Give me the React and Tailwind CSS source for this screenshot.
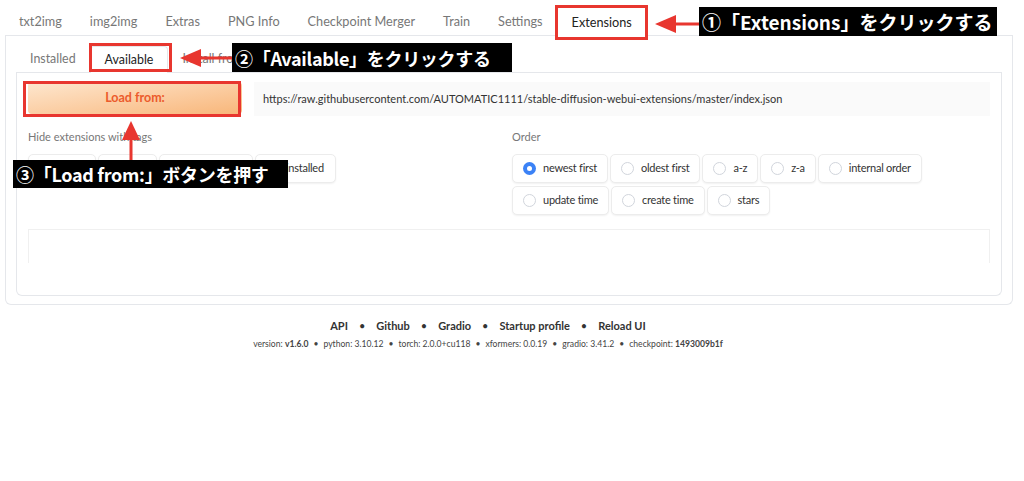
import { Fragment } from 'react'

const TOP_TABS = ['txt2img', 'img2img', 'Extras', 'PNG Info', 'Checkpoint Merger', 'Train', 'Settings', 'Extensions']
const SUB_TABS = ['Installed', 'Available', 'Install from URL', 'Backup/Restore']
const TAGS = [
  { name: 'script', checked: false },
  { name: 'ads', checked: true },
  { name: 'localization', checked: true },
  { name: 'installed', checked: true },
]
const ORDER_ROWS = [
  ['newest first', 'oldest first', 'a-z', 'z-a', 'internal order'],
  ['update time', 'create time', 'stars'],
]

function Checkbox({ checked }) {
  return checked ? (
    <span className="w-[12px] h-[12px] rounded-[3px] bg-[#2563eb] flex items-center justify-center">
      <svg width="9" height="9" viewBox="0 0 10 10"><path d="M2 5.2l2 2 4-4.4" stroke="white" strokeWidth="1.6" fill="none" /></svg>
    </span>
  ) : (
    <span className="w-[12px] h-[12px] rounded-[3px] border border-gray-300 bg-white" />
  )
}

function Radio({ checked }) {
  return checked ? (
    <span className="w-[13px] h-[13px] rounded-full bg-[#3b82f6] flex items-center justify-center">
      <span className="w-[5px] h-[5px] rounded-full bg-white" />
    </span>
  ) : (
    <span className="w-[13px] h-[13px] rounded-full border border-gray-300 bg-white" />
  )
}

function Pill({ children, wide }) {
  return (
    <label className={`h-[29px] flex items-center gap-[7px] rounded-[5px] border border-[#ececec] bg-white shadow-[0_1px_2px_rgba(0,0,0,0.06)] text-[11px] tracking-[-0.25px] text-[#333] ${wide ? 'px-[11px]' : 'px-[10px]'}`}>
      {children}
    </label>
  )
}

function Note({ children, className }) {
  return (
    <div className={`absolute bg-black text-white font-bold leading-none whitespace-nowrap flex items-center px-[3px] font-['Noto_Sans_CJK_JP',sans-serif] ${className}`}>
      {children}
    </div>
  )
}

export default function App() {
  return (
    <div className="relative w-[1024px] h-[481px] bg-white font-['Lato',sans-serif] overflow-hidden">
      <div className="pt-[6px] pl-[5px] pr-[11px]">
        {/* top tabs */}
        <div className="flex h-[30px] border-b border-[#e5e7eb]">
          {TOP_TABS.map(t => (
            <div key={t}
              className={`px-[14px] pt-[3px] flex items-center text-[12.7px] ${t === 'Extensions' ? 'bg-white border border-b-0 border-[#e5e7eb] rounded-t-[4px] text-[#222] -mb-px' : 'text-[#777]'}`}>
              {t}
            </div>
          ))}
        </div>

        <div className="border border-t-0 border-[#e5e7eb] rounded-b-[6px] px-[10px] pt-[10px] pb-[8px]">
          {/* sub tabs */}
          <div className="flex h-[27px] border-b border-[#e5e7eb]">
            {SUB_TABS.map(t => (
              <div key={t}
                className={`px-[14px] flex items-center text-[12.4px] ${t === 'Available' ? 'bg-white border border-b-0 border-[#e5e7eb] rounded-t-[4px] text-[#222] -mb-px' : 'text-[#777]'}`}>
                {t}
              </div>
            ))}
          </div>

          <div className="border border-t-0 border-[#e5e7eb] rounded-b-[6px] px-[11px] pt-[9px] pb-[32px]">
            <div className="flex gap-[12px]">
              <button className="w-[214px] h-[32px] rounded-[4px] bg-gradient-to-br from-[#fde7cf] to-[#f8b679] text-[#ec5b2c] font-bold text-[12.5px]">
                Load from:
              </button>
              <div className="flex-1 h-[34px] bg-[#fafafa] flex items-center px-[9px] text-[11px] text-[#333]">
                https://raw.githubusercontent.com/AUTOMATIC1111/stable-diffusion-webui-extensions/master/index.json
              </div>
            </div>

            <div className="grid grid-cols-2 gap-[6px] mt-[13px]">
              <div>
                <div className="text-[11px] text-[#777] mb-[8px]">Hide extensions with tags</div>
                <div className="flex gap-[2px]">
                  {TAGS.map(t => (
                    <Pill key={t.name} wide><Checkbox checked={t.checked} />{t.name}</Pill>
                  ))}
                </div>
              </div>
              <div>
                <div className="text-[11px] text-[#777] mb-[8px]">Order</div>
                <div className="flex flex-col gap-[3px]">
                  {ORDER_ROWS.map((row, r) => (
                    <div key={r} className="flex gap-[2px]">
                      {row.map(o => (
                        <Pill key={o}><Radio checked={o === 'newest first'} />{o}</Pill>
                      ))}
                    </div>
                  ))}
                </div>
              </div>
            </div>

            <div className="mt-[14px] h-[34px] border border-b-0 border-[#f0f0f0]" />
          </div>
        </div>
      </div>

      {/* footer */}
      <div className="mt-[13px] mr-[48px] flex flex-col items-center text-[#333]">
        <div className="flex gap-[11px] text-[11px] font-bold">
          {['API', 'Github', 'Gradio', 'Startup profile', 'Reload UI'].map((l, i) => (
            <Fragment key={l}>
              {i > 0 && <span className="font-normal">•</span>}
              <span>{l}</span>
            </Fragment>
          ))}
        </div>
        <div className="mt-[4px] flex gap-[5px] text-[8.6px] text-[#444]">
          <span>version: <b>v1.6.0</b></span><span>•</span>
          <span>python: 3.10.12</span><span>•</span>
          <span>torch: 2.0.0+cu118</span><span>•</span>
          <span>xformers: 0.0.19</span><span>•</span>
          <span>gradio: 3.41.2</span><span>•</span>
          <span>checkpoint: <b>1493009b1f</b></span>
        </div>
      </div>

      {/* annotations */}
      <div className="absolute left-[555px] top-[5px] w-[93px] h-[35px] border-[3px] border-[#e8362f]" />
      <div className="absolute left-[89px] top-[43px] w-[83px] h-[29px] border-[3px] border-[#e8362f]" />
      <div className="absolute left-[23px] top-[81px] w-[218px] h-[36px] border-[3px] border-[#e8362f]" />

      <svg className="absolute left-0 top-0" width="1024" height="481">
        <polygon points="655,24 676,15 676,33" fill="#e8362f" />
        <rect x="674" y="22.5" width="26" height="3" fill="#e8362f" />
        <polygon points="180,58 201,49 201,67" fill="#e8362f" />
        <rect x="199" y="56.5" width="34" height="3" fill="#e8362f" />
        <polygon points="131,121 122,140 140,140" fill="#e8362f" />
        <rect x="129.5" y="138" width="3" height="23" fill="#e8362f" />
      </svg>

      <Note className="left-[699px] top-[7px] w-[298px] h-[29px] text-[19px]">①「Extensions」をクリックする</Note>
      <Note className="left-[232px] top-[43px] w-[280px] h-[29px] text-[18px] tracking-[-0.3px]">②「Available」をクリックする</Note>
      <Note className="left-[13px] top-[160px] w-[275px] h-[28px] text-[18px] tracking-[-0.3px]">③「Load from:」ボタンを押す</Note>
    </div>
  )
}
